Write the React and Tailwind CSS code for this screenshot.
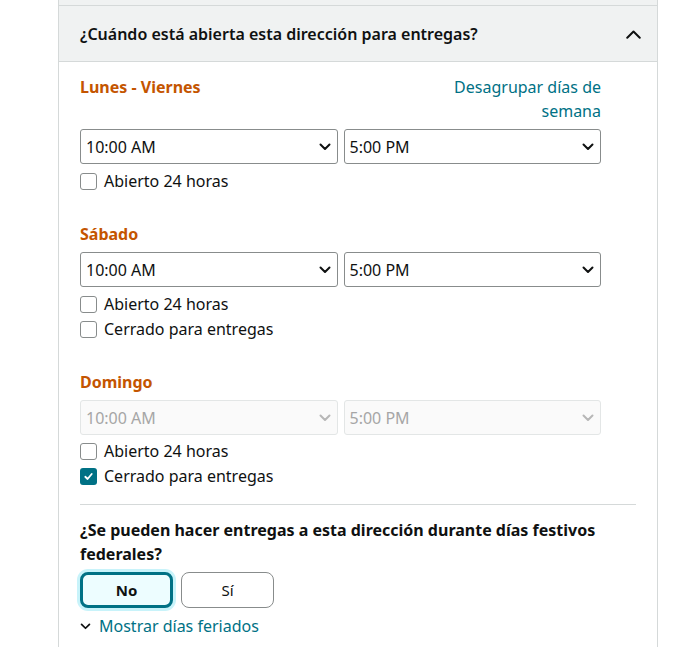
import React from "react";

const Chevron = ({ className = "", up = false, width = 2 }) => (
  <svg viewBox="0 0 12 8" className={className} fill="none">
    <path
      d={up ? "M1 7 6 2l5 5" : "M1.5 1.5 6 6l4.5-4.5"}
      stroke="currentColor"
      strokeWidth={width}
      strokeLinecap="round"
      strokeLinejoin="round"
    />
  </svg>
);

// Looks like a native dropdown; disabled days get the faded variant
const TimeSelect = ({ value, disabled }) => (
  <div
    className={
      "flex h-[35px] items-center justify-between rounded-[3px] border pl-[5px] pr-[6px] text-[16px] " +
      (disabled
        ? "border-[#e3e6e6] bg-[#fafafa] text-[#a6a6a6]"
        : "border-[#888c8c] bg-white text-[#0f1111]")
    }
  >
    <span>{value}</span>
    <Chevron
      className={
        "h-[8px] w-[12px] " + (disabled ? "text-[#b7b7b7]" : "text-[#0f1111]")
      }
    />
  </div>
);

const Check = ({ label, checked }) => (
  <label className="flex h-[24px] items-center gap-[7px] text-[16px] text-[#0f1111]">
    {checked ? (
      <span className="flex h-[17px] w-[17px] items-center justify-center rounded-[3px] bg-[#007185]">
        <svg viewBox="0 0 12 12" className="h-[11px] w-[11px]" fill="none">
          <path
            d="M2.5 6.3 5 8.7l4.5-5.4"
            stroke="white"
            strokeWidth="2"
            strokeLinecap="round"
            strokeLinejoin="round"
          />
        </svg>
      </span>
    ) : (
      <span className="h-[17px] w-[17px] rounded-[3px] border border-[#888c8c] bg-white" />
    )}
    <span>{label}</span>
  </label>
);

const DayBlock = ({ title, disabled, children, aside, checksGap = "mt-[5px]" }) => (
  <div className="w-[521px]">
    <div className="flex items-start justify-between">
      <h3 className="text-[16px] font-bold leading-[24px] text-[#c45500]">
        {title}
      </h3>
      {aside}
    </div>
    <div className="mt-[6px] grid grid-cols-2 gap-[6px]">
      <TimeSelect value="10:00 AM" disabled={disabled} />
      <TimeSelect value="5:00 PM" disabled={disabled} />
    </div>
    <div className={checksGap + " flex flex-col gap-[1px]"}>{children}</div>
  </div>
);

export default function App() {
  return (
    <div
      className="h-[647px] w-[698px] overflow-hidden bg-white leading-[24px] text-[#0f1111]"
      style={{ fontFamily: '"Noto Sans", Arial, sans-serif' }}
    >
      <div className="ml-[58px] h-full w-[600px] border-x border-[#d5d9d9]">
        <div className="h-[6px] border-b border-[#d5d9d9] bg-[#f0f2f2]" />

        {/* Section header */}
        <div className="flex h-[56px] items-center justify-between border-b border-[#d5d9d9] bg-[#f0f2f2] pl-[21px] pr-[15px]">
          <h2 className="text-[16px] font-semibold text-[#0f1111]">
            ¿Cuándo está abierta esta dirección para entregas?
          </h2>
          <Chevron up width={1.6} className="h-[10px] w-[17px] text-[#0f1111]" />
        </div>

        <div className="px-[21px] pt-[13px]">
          <DayBlock
            title="Lunes - Viernes"
            aside={
              <a className="w-[160px] text-right text-[16px] leading-[24px] text-[#007185]">
                Desagrupar días de semana
              </a>
            }
          >
            <Check label="Abierto 24 horas" />
          </DayBlock>

          <div className="mt-[29px]">
            <DayBlock title="Sábado">
              <Check label="Abierto 24 horas" />
              <Check label="Cerrado para entregas" />
            </DayBlock>
          </div>

          <div className="mt-[29px]">
            <DayBlock title="Domingo" disabled checksGap="mt-[4px]">
              <Check label="Abierto 24 horas" />
              <Check label="Cerrado para entregas" checked />
            </DayBlock>
          </div>

          <div className="mt-[16px] border-t border-[#d5d9d9]" />

          {/* Holiday delivery question */}
          <p className="mt-[13px] w-[530px] text-[16px] font-bold leading-[24px]">
            ¿Se pueden hacer entregas a esta dirección durante días festivos
            federales?
          </p>
          <div className="mt-[6px] flex gap-[8px]">
            <button className="h-[36px] w-[93px] rounded-[8px] border-[3px] border-[#007185] bg-[#edfdff] text-[15px] font-bold shadow-[0_0_0_3px_#c8f3fa]">
              No
            </button>
            <button className="h-[36px] w-[93px] rounded-[8px] border border-[#888c8c] bg-white text-[15px]">
              Sí
            </button>
          </div>
          <div className="mt-[6px] flex items-center gap-[8px] text-[16px] text-[#007185]">
            <Chevron className="h-[7px] w-[11px] text-[#0f1111]" />
            <span>Mostrar días feriados</span>
          </div>
        </div>
      </div>
    </div>
  );
}
